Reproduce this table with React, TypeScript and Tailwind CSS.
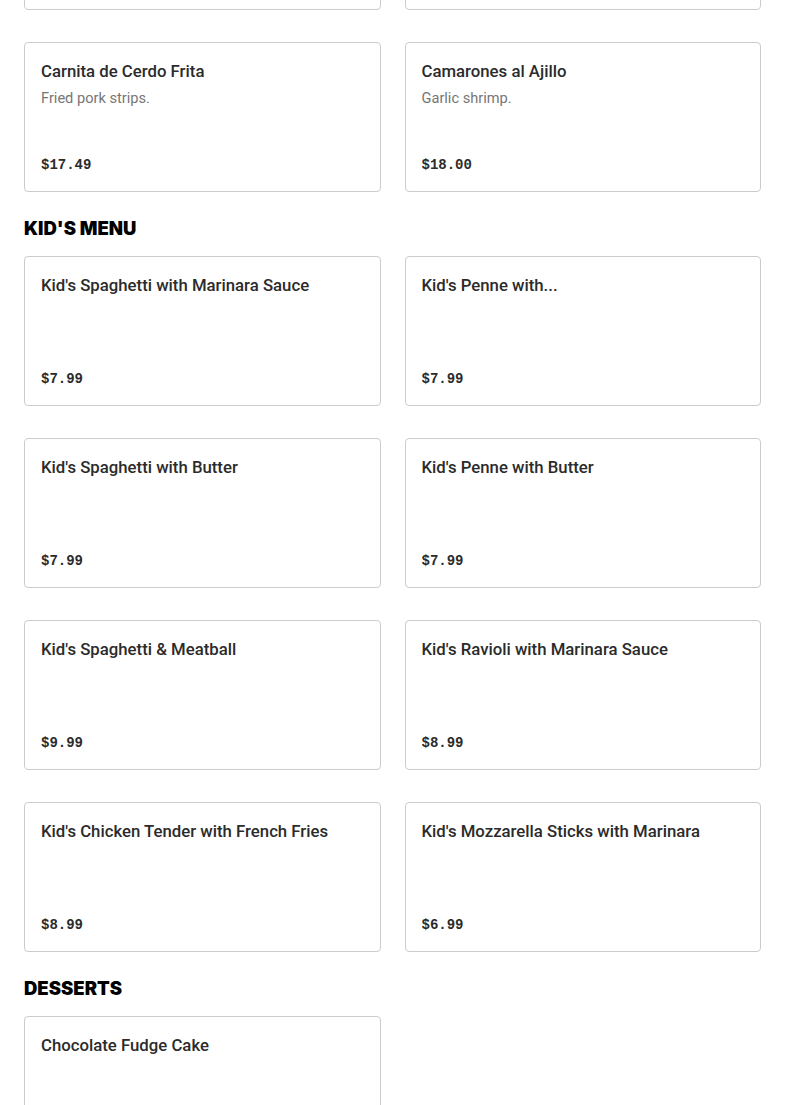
import React from "react";

type Item = { name: string; desc?: string; price: string };

const mains: Item[] = [
  { name: "Carnita de Cerdo Frita", desc: "Fried pork strips.", price: "$17.49" },
  { name: "Camarones al Ajillo", desc: "Garlic shrimp.", price: "$18.00" },
];

const kids: Item[] = [
  { name: "Kid's Spaghetti with Marinara Sauce", price: "$7.99" },
  { name: "Kid's Penne with...", price: "$7.99" },
  { name: "Kid's Spaghetti with Butter", price: "$7.99" },
  { name: "Kid's Penne with Butter", price: "$7.99" },
  { name: "Kid's Spaghetti & Meatball", price: "$9.99" },
  { name: "Kid's Ravioli with Marinara Sauce", price: "$8.99" },
  { name: "Kid's Chicken Tender with French Fries", price: "$8.99" },
  { name: "Kid's Mozzarella Sticks with Marinara", price: "$6.99" },
];

const desserts: Item[] = [{ name: "Chocolate Fudge Cake", price: "$6.99" }];

function Card({ item }: { item: Item }) {
  return (
    <div className="flex h-[150px] flex-col rounded-[4px] border border-[#cccccc] bg-white px-4 pt-4 pb-[14px]">
      <div className="text-[16.75px] font-medium leading-6 text-[#2b2b2b] [font-family:Roboto,'Noto_Sans',sans-serif]">
        {item.name}
      </div>
      {item.desc && (
        <div className="mt-[5px] text-[14.6px] leading-5 text-[#767676] [font-family:Roboto,'Noto_Sans',sans-serif]">
          {item.desc}
        </div>
      )}
      <div className="mt-auto text-[14px] font-bold leading-6 text-[#2b2b2b] [font-family:'Liberation_Mono','DejaVu_Sans_Mono',monospace]">
        {item.price}
      </div>
    </div>
  );
}

function Grid({ items, className = "" }: { items: Item[]; className?: string }) {
  return (
    <div className={"grid grid-cols-2 gap-x-6 gap-y-8 " + className}>
      {items.map((it, i) => (
        <Card key={i} item={it} />
      ))}
    </div>
  );
}

function Heading({ children }: { children: React.ReactNode }) {
  return (
    <h2 className="mt-6 mb-4 text-[18.5px] font-black uppercase leading-6 text-black [font-family:Inter,'Liberation_Sans',sans-serif]">
      {children}
    </h2>
  );
}

export default function App() {
  return (
    <div className="min-h-screen overflow-hidden bg-white">
      <div className="px-6">
        <div className="mt-[-140px] grid grid-cols-2 gap-x-6">
          <div className="h-[150px] rounded-[4px] border border-[#cccccc] bg-white" />
          <div className="h-[150px] rounded-[4px] border border-[#cccccc] bg-white" />
        </div>
        <Grid items={mains} className="mt-8" />
        <Heading>Kid's Menu</Heading>
        <Grid items={kids} />
        <Heading>Desserts</Heading>
        <Grid items={desserts} />
      </div>
    </div>
  );
}
